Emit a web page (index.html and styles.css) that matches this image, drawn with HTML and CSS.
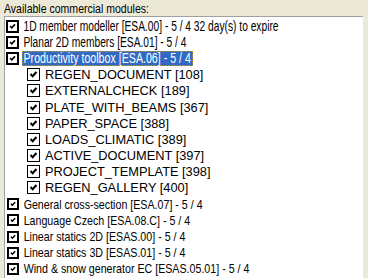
FILE: index.html
```html
<!DOCTYPE html>
<html>
<head>
<meta charset="utf-8">
<link rel="stylesheet" href="styles.css">
</head>
<body>
<div class="caption"><span class="ctxt">Available commercial modules:</span></div>
<div class="listbox">
  <div class="row top"><span class="cb"><svg viewBox="0 0 13 13"><path d="M3 6 L5.5 8.5 L10 3.5" /></svg></span><span class="txt">1D member modeller [ESA.00] - 5 / 4 32 day(s) to expire</span></div>
  <div class="row top"><span class="cb"><svg viewBox="0 0 13 13"><path d="M3 6 L5.5 8.5 L10 3.5" /></svg></span><span class="txt">Planar 2D members [ESA.01] - 5 / 4</span></div>
  <div class="row top"><span class="cb"><svg viewBox="0 0 13 13"><path d="M3 6 L5.5 8.5 L10 3.5" /></svg></span><span class="txt sel">Productivity toolbox [ESA.06] - 5 / 4</span></div>
  <div class="row sub"><span class="cb"><svg viewBox="0 0 13 13"><path d="M3 6 L5.5 8.5 L10 3.5" /></svg></span><span class="txt">REGEN_DOCUMENT [108]</span></div>
  <div class="row sub"><span class="cb"><svg viewBox="0 0 13 13"><path d="M3 6 L5.5 8.5 L10 3.5" /></svg></span><span class="txt">EXTERNALCHECK [189]</span></div>
  <div class="row sub"><span class="cb"><svg viewBox="0 0 13 13"><path d="M3 6 L5.5 8.5 L10 3.5" /></svg></span><span class="txt">PLATE_WITH_BEAMS [367]</span></div>
  <div class="row sub"><span class="cb"><svg viewBox="0 0 13 13"><path d="M3 6 L5.5 8.5 L10 3.5" /></svg></span><span class="txt">PAPER_SPACE [388]</span></div>
  <div class="row sub"><span class="cb"><svg viewBox="0 0 13 13"><path d="M3 6 L5.5 8.5 L10 3.5" /></svg></span><span class="txt">LOADS_CLIMATIC [389]</span></div>
  <div class="row sub"><span class="cb"><svg viewBox="0 0 13 13"><path d="M3 6 L5.5 8.5 L10 3.5" /></svg></span><span class="txt">ACTIVE_DOCUMENT [397]</span></div>
  <div class="row sub"><span class="cb"><svg viewBox="0 0 13 13"><path d="M3 6 L5.5 8.5 L10 3.5" /></svg></span><span class="txt">PROJECT_TEMPLATE [398]</span></div>
  <div class="row sub"><span class="cb"><svg viewBox="0 0 13 13"><path d="M3 6 L5.5 8.5 L10 3.5" /></svg></span><span class="txt">REGEN_GALLERY [400]</span></div>
  <div class="row small"><span class="cb"><svg viewBox="0 0 13 13"><path d="M3 6 L5.5 8.5 L10 3.5" /></svg></span><span class="txt">General cross-section [ESA.07] - 5 / 4</span></div>
  <div class="row small"><span class="cb"><svg viewBox="0 0 13 13"><path d="M3 6 L5.5 8.5 L10 3.5" /></svg></span><span class="txt">Language Czech [ESA.08.C] - 5 / 4</span></div>
  <div class="row small"><span class="cb"><svg viewBox="0 0 13 13"><path d="M3 6 L5.5 8.5 L10 3.5" /></svg></span><span class="txt">Linear statics 2D [ESAS.00] - 5 / 4</span></div>
  <div class="row small"><span class="cb"><svg viewBox="0 0 13 13"><path d="M3 6 L5.5 8.5 L10 3.5" /></svg></span><span class="txt">Linear statics 3D [ESAS.01] - 5 / 4</span></div>
  <div class="row small"><span class="cb"><svg viewBox="0 0 13 13"><path d="M3 6 L5.5 8.5 L10 3.5" /></svg></span><span class="txt">Wind &amp; snow generator EC [ESAS.05.01] - 5 / 4</span></div>
</div>
</body>
</html>
```
FILE: styles.css
```css
html, body {
  margin: 0;
  padding: 0;
  background: #ECE9D8;
  height: 278px;
  overflow: hidden;
  font-family: "Liberation Sans", Arial, sans-serif;
  color: #000;
}
.caption {
  font-size: 13px;
  line-height: 15px;
  padding: 1px 0 0 4px;
  height: 15px;
}
.ctxt {
  display: inline-block;
  transform: scaleX(0.81);
  transform-origin: left center;
}
.listbox {
  margin-left: 4px;
  width: 358px;
  height: 270px;
  background: #fff;
  border-top: 1px solid #a0a0a0;
  border-left: 1px solid #a0a0a0;
  padding-top: 1px;
  overflow: hidden;
}
.row {
  display: flex;
  align-items: center;
  height: 16.2px;
  white-space: nowrap;
}
.cb {
  box-sizing: border-box;
  width: 13px;
  height: 13px;
  border: 2px solid #000;
  background: #fff;
  display: flex;
  flex: none;
}
.cb svg {
  width: 100%;
  height: 100%;
}
.cb path {
  fill: none;
  stroke: #000;
  stroke-width: 2.4;
}
.txt {
  display: inline-block;
  padding: 0 2px;
  line-height: 15px;
  margin-left: 3px;
  transform-origin: left center;
}
.top { padding-left: 1px; font-size: 14px; }
.top .txt { transform: scaleX(0.73); }
.sub { padding-left: 22px; font-size: 13px; }
.sub .cb { border-width: 1.5px; }
.sub .txt { transform: scaleX(0.985); }
.small { padding-left: 2px; font-size: 13px; }
.small .cb { width: 12px; height: 12px; }
.small .txt { transform: scaleX(0.82); }
.top .sel {
  background: #316AC5;
  color: #fff;
  outline: 1px dotted #E7A100;
  outline-offset: -1px;
  transform: scaleX(0.76);
  padding: 0 3px 0 2px;
}
```
